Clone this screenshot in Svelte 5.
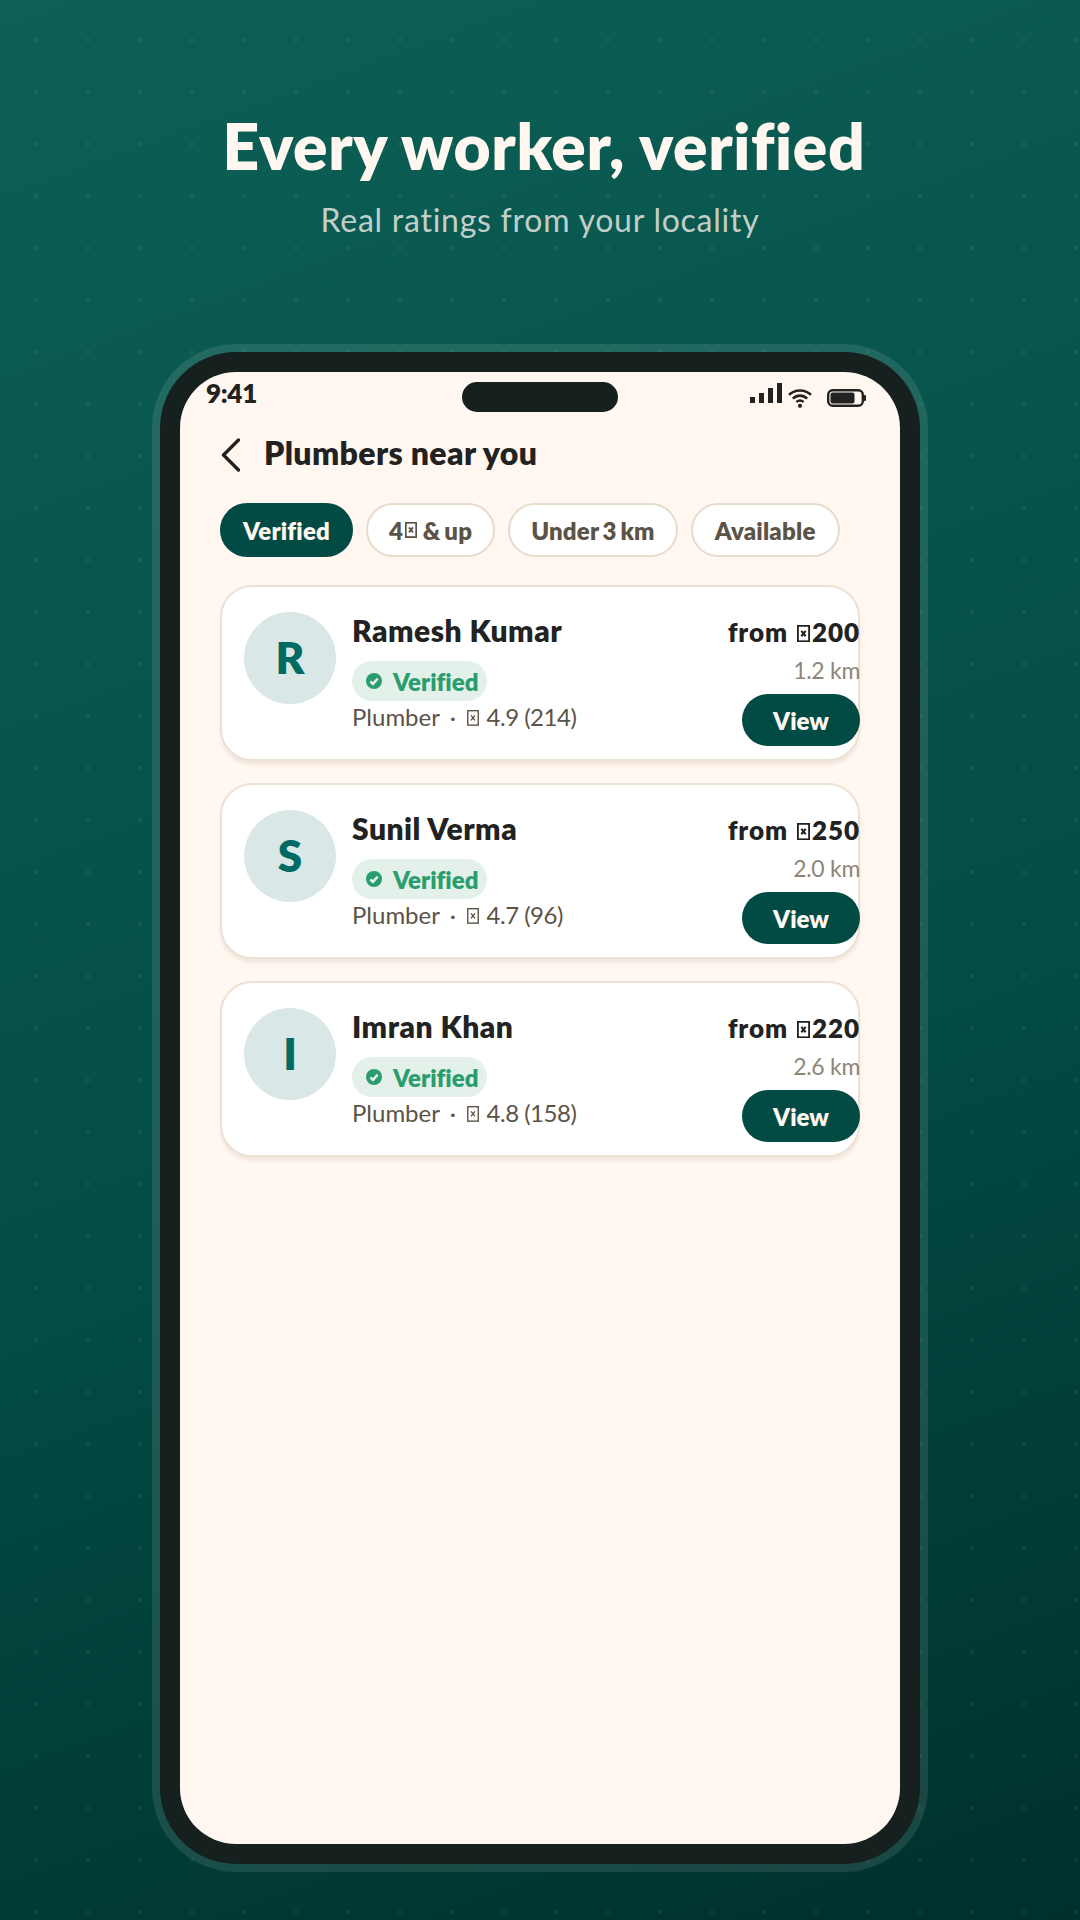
<script>
  const filters = [
    { parts: ["Verified"], on: true },
    { parts: ["4", null, " & up"] },
    { parts: ["Under 3 km"] },
    { parts: ["Available"] }
  ];

  const workers = [
    { initial: "R", name: "Ramesh Kumar", rating: "4.9 (214)", price: "200", dist: "1.2 km" },
    { initial: "S", name: "Sunil Verma", rating: "4.7 (96)", price: "250", dist: "2.0 km" },
    { initial: "I", name: "Imran Khan", rating: "4.8 (158)", price: "220", dist: "2.6 km" }
  ];
</script>

{#snippet tofu()}
  <svg class="tofu" viewBox="0 0 12 16" aria-hidden="true">
    <rect x="0.7" y="0.7" width="10.6" height="14.6" fill="none" stroke="currentColor" />
    <path d="M4 5.5 L8 10.5 M8 5.5 L4 10.5" stroke="currentColor" fill="none" />
  </svg>
{/snippet}

<div class="page">
  <header class="hero">
    <h1>Every worker, verified</h1>
    <p>Real ratings from your locality</p>
  </header>

  <div class="phone">
    <div class="screen">
      <div class="status">
        <span class="time">9:41</span>
        <div class="notch"></div>
        <div class="status-icons">
          <svg class="signal" width="32" height="20" viewBox="0 0 32 20" aria-hidden="true">
            <rect x="0" y="14" width="5" height="6" fill="#222" />
            <rect x="9" y="10" width="5" height="10" fill="#222" />
            <rect x="18" y="5" width="5" height="15" fill="#222" />
            <rect x="27" y="0" width="5" height="20" fill="#222" />
          </svg>
          <svg class="wifi" width="24" height="20" viewBox="0 0 24 20" aria-hidden="true">
            <path d="M1 6.8 C7 1 17 1 23 6.8" fill="none" stroke="#222" stroke-width="2.6" />
            <path d="M4.8 10.6 C9 6.6 15 6.6 19.2 10.6" fill="none" stroke="#222" stroke-width="2.6" />
            <path d="M8.4 14 C10.6 12.2 13.4 12.2 15.6 14" fill="none" stroke="#222" stroke-width="2.4" />
            <circle cx="12" cy="17.8" r="2.1" fill="#222" />
          </svg>
          <svg class="battery" width="39" height="18" viewBox="0 0 39 18" aria-hidden="true">
            <rect x="1.2" y="1.2" width="34.6" height="15.6" rx="4.5" fill="none" stroke="#222" stroke-width="2.4" />
            <rect x="3.5" y="3.5" width="24" height="11" rx="2" fill="#222" />
            <rect x="36" y="6" width="3" height="6" rx="1.2" fill="#222" />
          </svg>
        </div>
      </div>

      <div class="topbar">
        <svg class="back" width="20" height="34" viewBox="0 0 20 34" aria-hidden="true">
          <path d="M18.5 2 L3.5 17 L18.5 32" fill="none" stroke="#222" stroke-width="3.4" stroke-linecap="round" stroke-linejoin="round" />
        </svg>
        <h2>Plumbers near you</h2>
      </div>

      <div class="chips">
        {#each filters as f}
          <span class="chip" class:on={f.on}>
            {#each f.parts as part}
              {#if part === null}{@render tofu()}{:else}{part}{/if}
            {/each}
          </span>
        {/each}
      </div>

      <div class="list">
        {#each workers as w}
          <div class="card">
            <div class="avatar">{w.initial}</div>
            <div class="info">
              <div class="name">{w.name}</div>
              <span class="badge">
                <svg width="16" height="16" viewBox="0 0 17 17" aria-hidden="true">
                  <circle cx="8.5" cy="8.5" r="8.5" fill="#2a9d6e" />
                  <path d="M4.6 8.8 L7.4 11.6 L12.4 6" fill="none" stroke="#e3f1ea" stroke-width="2.6" />
                </svg>
                Verified
              </span>
              <div class="meta">Plumber <span class="dot">·</span> {@render tofu()} <span class="rating">{w.rating}</span></div>
            </div>
            <div class="side">
              <div class="price">from {@render tofu()}{w.price}</div>
              <div class="dist">{w.dist}</div>
              <button class="view">View</button>
            </div>
          </div>
        {/each}
      </div>
    </div>
  </div>
</div>

<style>
  :global(body) {
    margin: 0;
  }

  .page {
    width: 1080px;
    height: 1920px;
    overflow: hidden;
    box-sizing: border-box;
    display: flex;
    flex-direction: column;
    align-items: center;
    font-family: "Lato", "Liberation Sans", sans-serif;
    font-variant-ligatures: none;
    background-color: #07504a;
    background-image:
      radial-gradient(circle, rgba(255, 255, 255, 0.05) 2px, transparent 2.5px),
      linear-gradient(160deg, #0d6056 0%, #034d46 55%, #00302b 100%);
    background-size: 52px 52px, 100% 100%;
    background-position: 10px 14px, 0 0;
  }

  .hero {
    text-align: center;
    color: #fff7f0;
    padding-top: 106px;
    height: 246px;
    box-sizing: content-box;
  }

  h1 {
    margin: 0;
    padding-left: 8px;
    font-size: 64px;
    line-height: 80px;
    font-weight: 800;
    letter-spacing: 0.67px;
    white-space: nowrap;
  }

  .hero p {
    margin: 14px 0 0;
    font-size: 32px;
    line-height: 40px;
    letter-spacing: 0.75px;
    color: rgba(255, 247, 240, 0.75);
  }

  .phone {
    width: 760px;
    height: 1512px;
    box-sizing: border-box;
    padding: 20px;
    border-radius: 76px;
    background: #16211f;
    box-shadow: 0 0 0 8px rgba(255, 255, 255, 0.1);
    flex: none;
  }

  .screen {
    height: 100%;
    border-radius: 56px;
    background: #fff7f0;
    overflow: hidden;
    color: #222;
  }

  .status {
    display: grid;
    grid-template-columns: 1fr 156px 1fr;
    height: 40px;
    padding: 10px 26px 0;
  }

  .time {
    font-size: 26px;
    font-weight: 800;
    line-height: 22px;
    letter-spacing: -0.3px;
  }

  .notch {
    height: 30px;
    border-radius: 15px;
    background: #16211f;
  }

  .status-icons {
    display: flex;
    align-items: flex-start;
    justify-content: flex-end;
    height: 30px;
    margin-right: 8px;
  }

  .signal {
    margin-top: 1px;
  }

  .wifi {
    margin: 6px 0 0 6px;
  }

  .battery {
    margin: 7px 0 0 15px;
  }

  .topbar {
    display: flex;
    align-items: center;
    gap: 24px;
    padding: 11px 40px 0;
    height: 40px;
  }

  .back {
    margin-top: 4px;
  }

  h2 {
    margin: 0;
    font-size: 32px;
    line-height: 40px;
    font-weight: 800;
    letter-spacing: 0.35px;
  }

  .chips {
    display: flex;
    gap: 13px;
    margin: 30px 0 0 40px;
  }

  .chip {
    display: flex;
    align-items: center;
    height: 54px;
    box-sizing: border-box;
    padding: 0 21px;
    border: 2px solid #e6dccd;
    border-radius: 27px;
    background: #fff;
    color: #5c5347;
    font-size: 24px;
    font-weight: 800;
    letter-spacing: 0.2px;
    word-spacing: -2px;
    white-space: pre;
  }

  .chip:last-child {
    padding: 0 22px;
  }

  .chip.on {
    background: #024b45;
    border-color: #024b45;
    color: #fff7f0;
  }

  .list {
    display: flex;
    flex-direction: column;
    gap: 22px;
    margin: 28px 40px 0;
  }

  .card {
    display: flex;
    align-items: flex-start;
    height: 176px;
    box-sizing: border-box;
    padding: 25px 0 0 22px;
    border: 2px solid #ece2d4;
    border-radius: 32px;
    background: #fff;
    box-shadow: 0 4px 3px rgba(120, 90, 50, 0.09);
  }

  .avatar {
    width: 92px;
    height: 92px;
    flex: none;
    box-sizing: border-box;
    padding-bottom: 2px;
    border-radius: 50%;
    background: #d9e8e6;
    color: #006b62;
    font-size: 44px;
    font-weight: 800;
    display: flex;
    align-items: center;
    justify-content: center;
  }

  .info {
    flex: 1;
    margin-left: 16px;
  }

  .name {
    font-size: 30px;
    line-height: 38px;
    font-weight: 800;
    letter-spacing: 0.5px;
    margin-top: -1px;
  }

  .badge {
    display: inline-flex;
    align-items: center;
    gap: 11px;
    height: 40px;
    margin-top: 12px;
    padding: 0 9px 0 14px;
    border-radius: 20px;
    background: #e3f1ea;
    color: #2a9d6e;
    font-size: 24px;
    font-weight: 800;
  }

  .meta {
    font-size: 24px;
    line-height: 30px;
    color: #5c5347;
    margin-top: 1px;
  }

  .dot {
    margin: 0 4px;
  }

  .rating {
    letter-spacing: -0.5px;
  }

  .side {
    display: flex;
    flex-direction: column;
    align-items: flex-end;
    margin-right: -2px;
    flex: none;
  }

  .price {
    font-size: 26px;
    line-height: 32px;
    font-weight: 800;
    letter-spacing: 0.9px;
    margin-top: 4px;
  }

  .dist {
    font-size: 23px;
    line-height: 28px;
    letter-spacing: -0.3px;
    color: #8f8577;
    margin-top: 8px;
  }

  .view {
    width: 118px;
    height: 52px;
    margin-top: 10px;
    border: none;
    border-radius: 26px;
    background: #024b45;
    color: #fff7f0;
    font: 800 24px "Lato", "Liberation Sans", sans-serif;
  }

  .tofu {
    width: 0.5em;
    height: 0.66em;
    margin: 0 0.05em;
    stroke-width: 1.4;
  }

  .chip .tofu,
  .price .tofu {
    margin: 0 0.08em;
    stroke-width: 1.9;
  }
</style>
